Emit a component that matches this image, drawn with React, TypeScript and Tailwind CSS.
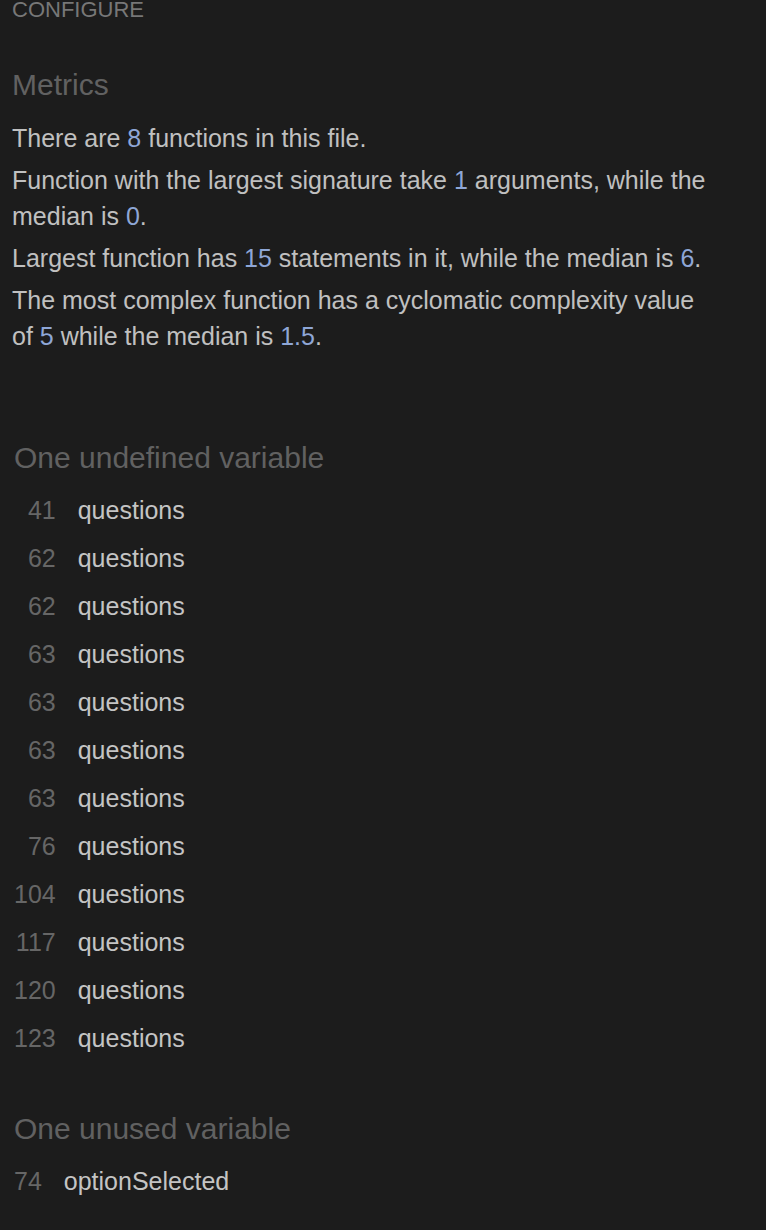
const undefinedLines = [41, 62, 62, 63, 63, 63, 63, 76, 104, 117, 120, 123];

function Num({ children }: { children: React.ReactNode }) {
  return <span className="text-[#8ea6d6]">{children}</span>;
}

function VarTable({ rows }: { rows: { line: number; name: string }[] }) {
  return (
    <table className="ml-[14px] mt-[10px] border-collapse">
      <tbody>
        {rows.map((r, i) => (
          <tr key={i} className="h-[48px]">
            <td className="pr-[22px] text-right align-middle text-[#666666]">{r.line}</td>
            <td className="align-middle text-[#c4c4c4]">{r.name}</td>
          </tr>
        ))}
      </tbody>
    </table>
  );
}

export default function App() {
  return (
    <main
      className="min-h-[1230px] bg-[#1c1c1c] text-[25px] leading-[36px] text-[#c0c0c0] overflow-hidden"
      style={{ fontFamily: '"Liberation Sans", Arial, sans-serif' }}
    >
      <div className="pl-3 text-[22px] leading-[20px] text-[#777777]">CONFIGURE</div>

      <h2 className="mt-[47px] pl-3 text-[30px] leading-[36px] text-[#616161]">Metrics</h2>

      <div className="mt-[17px] pl-3 w-[712px] flex flex-col gap-[6px]">
        <p>
          There are <Num>8</Num> functions in this file.
        </p>
        <p>
          Function with the largest signature take <Num>1</Num> arguments, while the median is <Num>0</Num>.
        </p>
        <p>
          Largest function has <Num>15</Num> statements in it, while the median is <Num>6</Num>.
        </p>
        <p>
          The most complex function has a cyclomatic complexity value of <Num>5</Num> while the median is{' '}
          <Num>1.5</Num>.
        </p>
      </div>

      <h2 className="mt-[86px] pl-[14px] text-[30px] leading-[36px] text-[#616161]">One undefined variable</h2>
      <VarTable rows={undefinedLines.map((line) => ({ line, name: 'questions' }))} />

      <h2 className="mt-[49px] pl-[14px] text-[30px] leading-[36px] text-[#616161]">One unused variable</h2>
      <VarTable rows={[{ line: 74, name: 'optionSelected' }]} />
    </main>
  );
}
